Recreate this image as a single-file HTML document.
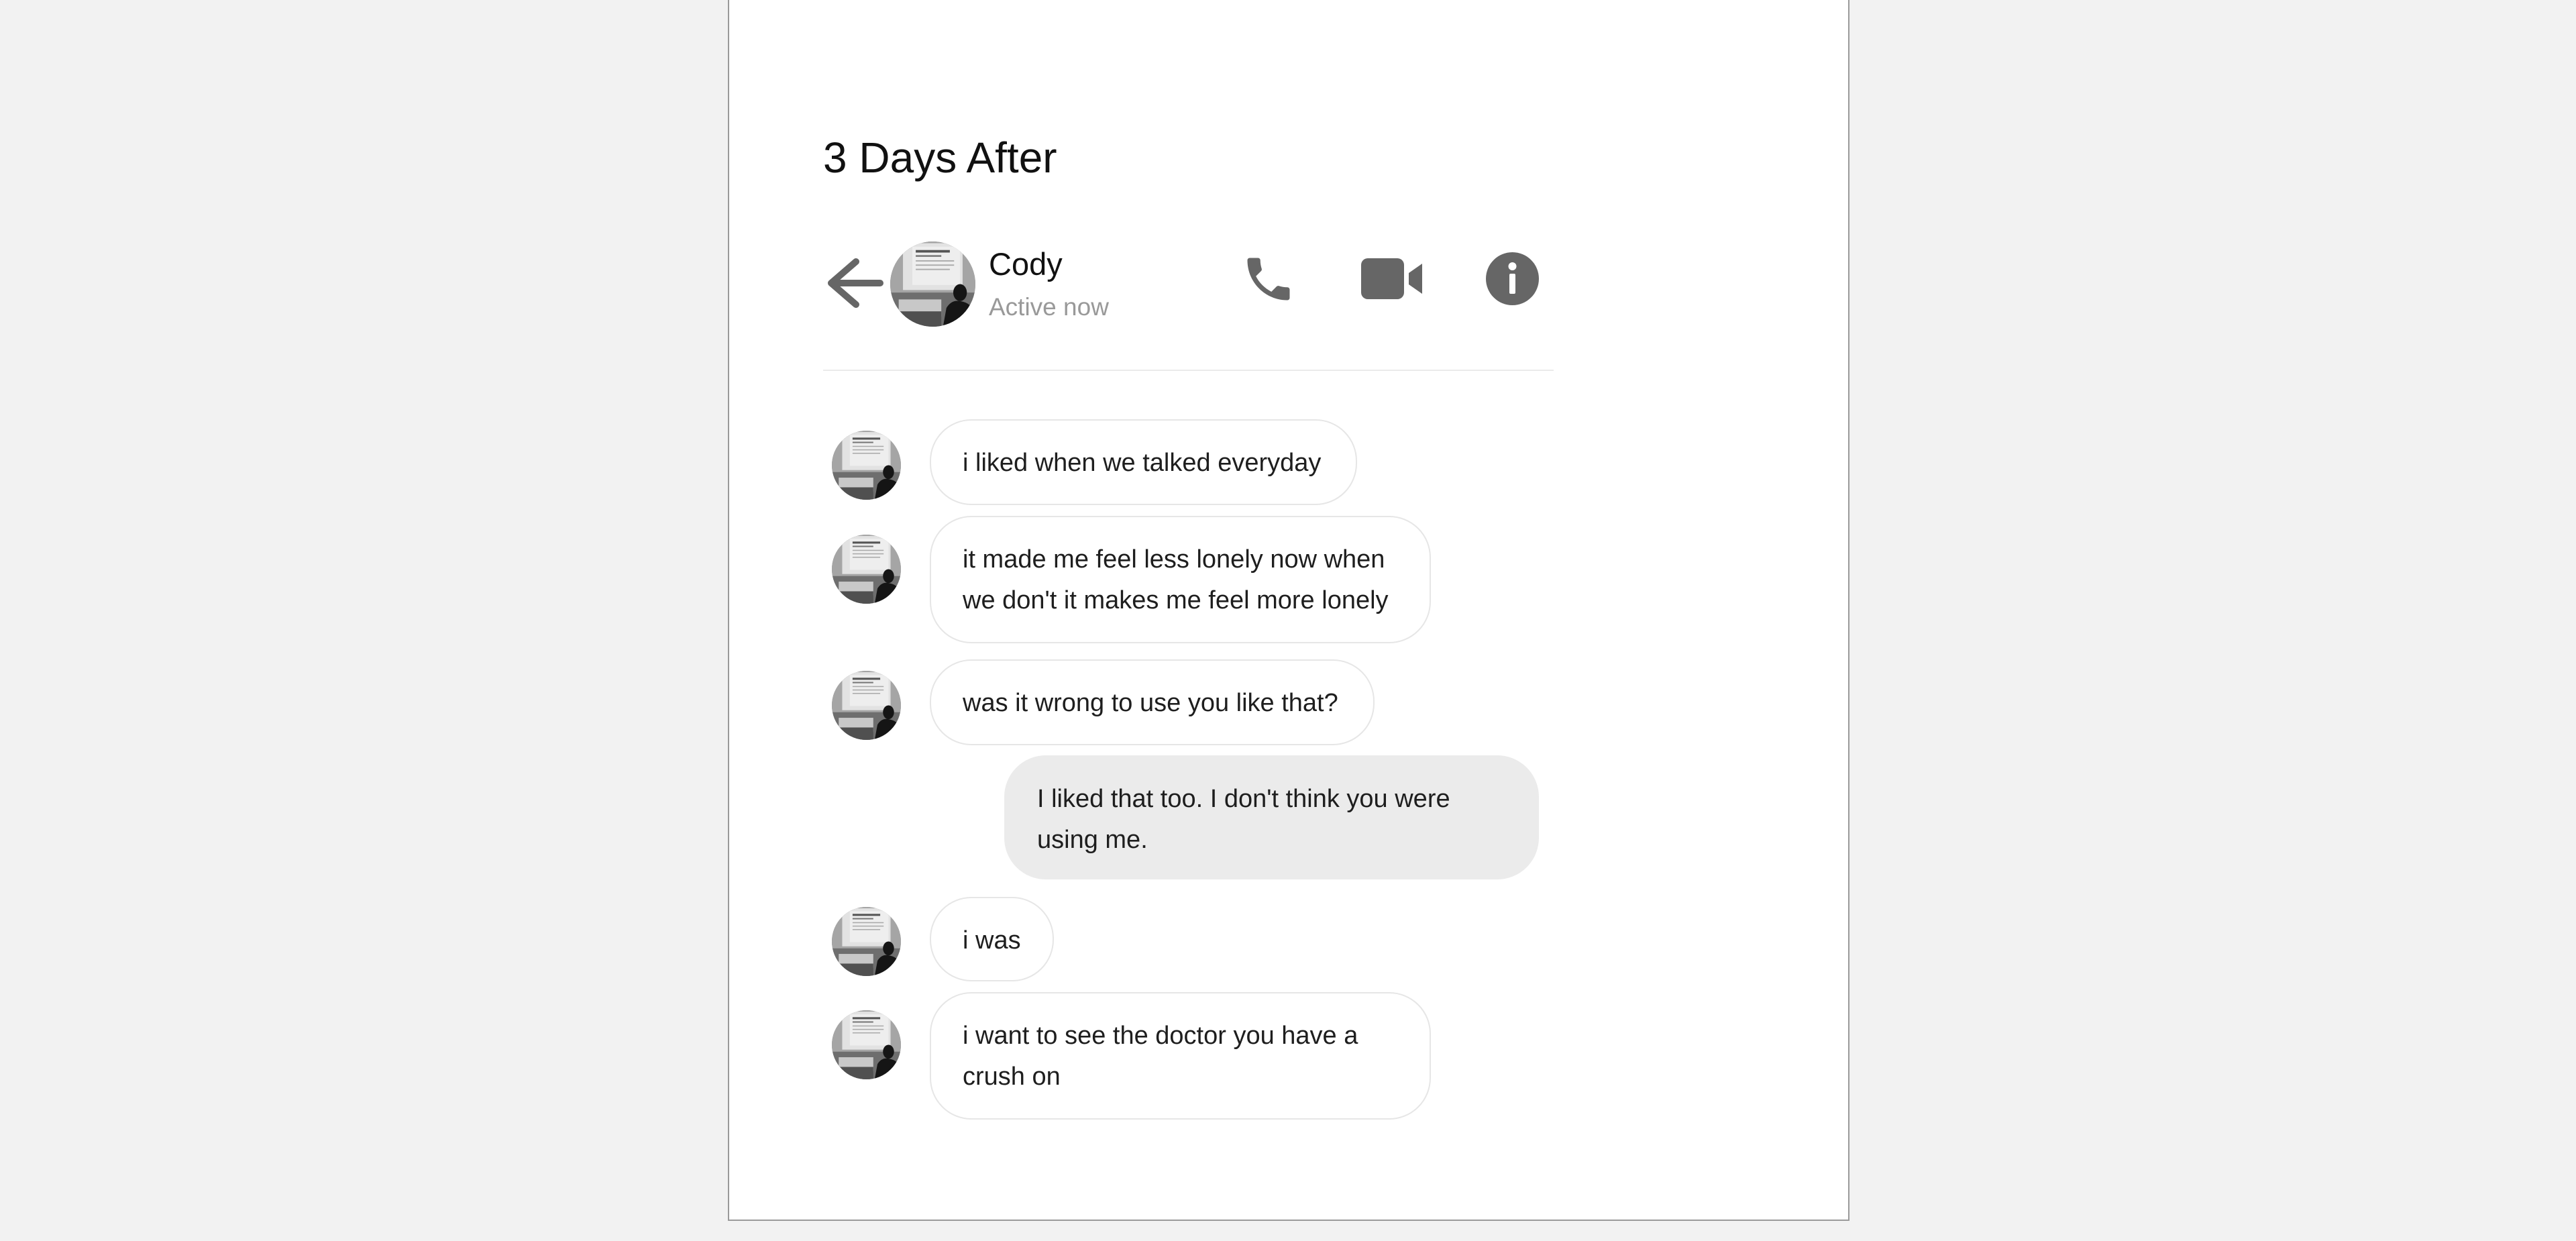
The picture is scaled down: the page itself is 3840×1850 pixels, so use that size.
<!DOCTYPE html>
<html><head><meta charset="utf-8"><style>
html,body{margin:0;padding:0;background:#f2f2f2;width:3840px;height:1850px;overflow:hidden;font-family:"Liberation Sans",Arial,sans-serif}
.panel{position:absolute;left:1085px;top:-2px;width:1668px;height:1818px;background:#fff;border:2px solid #9a9a9a}
.abs{position:absolute}
.bub{position:absolute;left:1386px;box-sizing:border-box;border:2px solid #e6e6e6;border-radius:62px;background:#fff;color:#1e1e1e;font-size:38px;line-height:61px;padding:33px 40px 0 47px;white-space:nowrap}
.av{position:absolute;left:1240px;width:103px;height:103px}
</style></head><body>
<svg width="0" height="0" style="position:absolute"><defs>
<clipPath id="cc"><circle cx="50" cy="50" r="50"/></clipPath>
<symbol id="ava" viewBox="0 0 100 100"><g clip-path="url(#cc)">
<rect width="100" height="100" fill="#8a8a8a"/>
<rect x="0" y="0" width="100" height="60" fill="#a5a5a5"/>
<rect x="15" y="2" width="70" height="55" fill="#e2e2e2"/>
<rect x="26" y="6" width="56" height="45" fill="#eeeeee"/>
<rect x="30" y="10" width="40" height="3" fill="#555"/>
<rect x="30" y="16" width="30" height="2" fill="#777"/>
<rect x="30" y="22" width="45" height="1.5" fill="#aaa"/>
<rect x="30" y="27" width="45" height="1.5" fill="#aaa"/>
<rect x="30" y="32" width="40" height="1.5" fill="#aaa"/>
<rect x="0" y="60" width="100" height="40" fill="#6e6e6e"/>
<rect x="10" y="68" width="50" height="20" fill="#c8c8c8"/>
<rect x="0" y="82" width="60" height="18" fill="#505050"/>
<ellipse cx="82" cy="60" rx="8" ry="10" fill="#151515"/>
<path d="M62 100 L66 78 Q72 68 82 70 Q96 72 100 85 L100 100Z" fill="#151515"/>
</g></symbol></defs></svg>
<div class="panel"></div>
<div class="abs" style="left:1227px;top:195px;font-size:64px;color:#111;line-height:80px">3 Days After</div>
<svg class="abs" style="left:1228px;top:380px" width="95" height="84" viewBox="1228 380 95 84"><g stroke="#666" stroke-width="10" stroke-linecap="round" stroke-linejoin="round" fill="none"><path d="M1312 422 H1239 M1276 390 L1239 422 L1276 454"/></g></svg>
<svg class="abs" style="left:1327px;top:360px" width="127" height="127"><use href="#ava" width="127" height="127"/></svg>
<div class="abs" style="left:1474px;top:366px;font-size:47px;color:#111;line-height:56px">Cody</div>
<div class="abs" style="left:1474px;top:436px;font-size:37px;color:#999;line-height:44px">Active now</div>
<svg class="abs" style="left:1849px;top:374px" width="84" height="84" viewBox="0 0 24 24"><path fill="#666" d="M6.62 10.79c1.44 2.83 3.76 5.14 6.59 6.59l2.2-2.2c.27-.27.67-.36 1.020-.24 1.12.37 2.33.57 3.57.57.55 0 1 .45 1 1V20c0 .55-.45 1-1 1-9.39 0-17-7.610-17-17 0-.55.45-1 1-1h3.5c.55 0 1 .45 1 1 0 1.25.2 2.45.57 3.57.11.35.03.74-.25 1.02l-2.2 2.2z"/></svg>
<svg class="abs" style="left:2029px;top:385px" width="91" height="61"><rect x="0" y="0" width="64" height="61" rx="10" fill="#666"/><path d="M71 22 L91 8 L91 53 L71 39Z" fill="#666"/></svg>
<svg class="abs" style="left:2215px;top:376px" width="79" height="79"><circle cx="39.5" cy="39.5" r="39.5" fill="#666"/><circle cx="39.5" cy="21" r="6" fill="#fff"/><rect x="35" y="32" width="9" height="30" rx="2" fill="#fff"/></svg>
<div class="abs" style="left:1227px;top:551px;width:1089px;height:2px;background:#ebebeb"></div>

<svg class="av" style="top:642px"><use href="#ava" width="103" height="103"/></svg>
<div class="bub" style="top:625px;width:637px;height:128px">i liked when we talked everyday</div>
<svg class="av" style="top:797px"><use href="#ava" width="103" height="103"/></svg>
<div class="bub" style="top:769px;width:747px;height:190px">it made me feel less lonely now when<br>we don't it makes me feel more lonely</div>
<svg class="av" style="top:1000px"><use href="#ava" width="103" height="103"/></svg>
<div class="bub" style="top:983px;width:663px;height:128px">was it wrong to use you like that?</div>
<div class="bub" style="left:1497px;top:1126px;width:797px;height:185px;background:#ebebeb;border-color:#ebebeb">I liked that too. I don't think you were<br>using me.</div>
<svg class="av" style="top:1352px"><use href="#ava" width="103" height="103"/></svg>
<div class="bub" style="top:1337px;width:185px;height:126px">i was</div>
<svg class="av" style="top:1506px"><use href="#ava" width="103" height="103"/></svg>
<div class="bub" style="top:1479px;width:747px;height:190px">i want to see the doctor you have a<br>crush on</div>
</body></html>
